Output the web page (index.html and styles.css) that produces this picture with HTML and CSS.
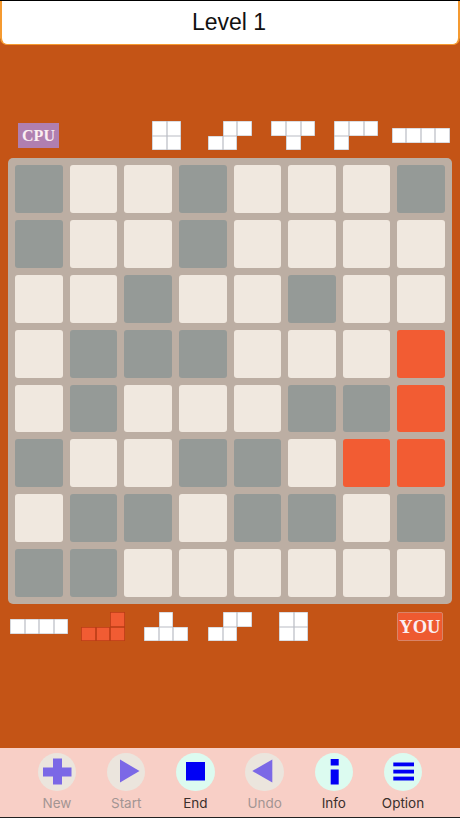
FILE: index.html
```html
<!DOCTYPE html>
<html lang="en">
<head>
<meta charset="utf-8">
<title>Level 1</title>
<link rel="stylesheet" href="styles.css">
</head>
<body>
<div class="screen">
  <header class="title-bar">Level 1</header>
  <main class="game">
    <div class="tray tray-cpu">
      <div class="badge badge-cpu">CPU</div>
      <div class="piece p-square c-square"><i></i><i></i><i></i><i></i></div>
      <div class="piece p-three c-s"><b></b><i></i><i></i><i></i><i></i><b></b></div>
      <div class="piece p-three c-t"><i></i><i></i><i></i><b></b><i></i><b></b></div>
      <div class="piece p-three c-l"><i></i><i></i><i></i><i></i><b></b><b></b></div>
      <div class="piece p-line c-line"><i></i><i></i><i></i><i></i></div>
    </div>
    <div class="board">
      <div class="cell g"></div><div class="cell"></div><div class="cell"></div><div class="cell g"></div><div class="cell"></div><div class="cell"></div><div class="cell"></div><div class="cell g"></div>
      <div class="cell g"></div><div class="cell"></div><div class="cell"></div><div class="cell g"></div><div class="cell"></div><div class="cell"></div><div class="cell"></div><div class="cell"></div>
      <div class="cell"></div><div class="cell"></div><div class="cell g"></div><div class="cell"></div><div class="cell"></div><div class="cell g"></div><div class="cell"></div><div class="cell"></div>
      <div class="cell"></div><div class="cell g"></div><div class="cell g"></div><div class="cell g"></div><div class="cell"></div><div class="cell"></div><div class="cell"></div><div class="cell r"></div>
      <div class="cell"></div><div class="cell g"></div><div class="cell"></div><div class="cell"></div><div class="cell"></div><div class="cell g"></div><div class="cell g"></div><div class="cell r"></div>
      <div class="cell g"></div><div class="cell"></div><div class="cell"></div><div class="cell g"></div><div class="cell g"></div><div class="cell"></div><div class="cell r"></div><div class="cell r"></div>
      <div class="cell"></div><div class="cell g"></div><div class="cell g"></div><div class="cell"></div><div class="cell g"></div><div class="cell g"></div><div class="cell"></div><div class="cell g"></div>
      <div class="cell g"></div><div class="cell g"></div><div class="cell"></div><div class="cell"></div><div class="cell"></div><div class="cell"></div><div class="cell"></div><div class="cell"></div>
    </div>
    <div class="tray tray-you">
      <div class="piece p-line"><i></i><i></i><i></i><i></i></div>
      <div class="piece p-three used y-l"><b></b><b></b><i></i><i></i><i></i><i></i></div>
      <div class="piece p-three y-t"><b></b><i></i><b></b><i></i><i></i><i></i></div>
      <div class="piece p-three y-s"><b></b><i></i><i></i><i></i><i></i><b></b></div>
      <div class="piece p-square y-square"><i></i><i></i><i></i><i></i></div>
      <div class="badge badge-you">YOU</div>
    </div>
  </main>
  <nav class="toolbar">
    <div class="tool off">
      <span class="disc"><svg viewBox="0 0 38 38"><path d="M15 5.500h9v9h9.500v9H24v8h-9v-8H5v-9h10z"/></svg></span>
      <span class="label">New</span>
    </div>
    <div class="tool off">
      <span class="disc"><svg viewBox="0 0 38 38"><path d="M13 6.500L32.500 18 13 29.500z"/></svg></span>
      <span class="label">Start</span>
    </div>
    <div class="tool">
      <span class="disc"><svg viewBox="0 0 38 38"><rect x="10" y="9" width="19" height="18.500"/></svg></span>
      <span class="label">End</span>
    </div>
    <div class="tool off">
      <span class="disc"><svg viewBox="0 0 38 38"><path d="M27.300 6.500v23L7.300 18z"/></svg></span>
      <span class="label">Undo</span>
    </div>
    <div class="tool">
      <span class="disc"><svg viewBox="0 0 38 38"><rect x="15.700" y="6" width="8" height="6.500"/><rect x="15.700" y="16.500" width="8" height="15"/></svg></span>
      <span class="label">Info</span>
    </div>
    <div class="tool">
      <span class="disc"><svg viewBox="0 0 38 38"><rect x="9.300" y="9.500" width="20.700" height="3.800"/><rect x="9.300" y="16.700" width="20.700" height="3.800"/><rect x="9.300" y="23.600" width="20.700" height="3.900"/></svg></span>
      <span class="label">Option</span>
    </div>
  </nav>
</div>
</body>
</html>
```
FILE: styles.css
```css
* { box-sizing: border-box; }
html, body { margin: 0; padding: 0; }
.screen {
  width: 460px;
  height: 818px;
  display: flex;
  flex-direction: column;
  background: #c45416;
  overflow: hidden;
}
.title-bar {
  height: 44px;
  margin: 1px 0 0;
  padding-right: 2px;
  background: #fff;
  border-bottom: 1.500px solid #f59a30;
  border-left: 2px solid #f59a30;
  border-right: 2px solid #f59a30;
  border-radius: 0 0 7px 7px;
  font: 23px/42px "Liberation Sans", Arial, sans-serif;
  text-align: center;
  color: #111;
  box-shadow: 0 -1px 0 #000;
}
.game {
  flex: 1;
  display: flex;
  flex-direction: column;
  padding: 76px 8px 0;
}
.tray {
  display: flex;
  align-items: center;
  height: 29px;
}
.tray-cpu { padding-left: 10px; margin-bottom: 8px; }
.tray-you { margin-top: 8px; padding-left: 2px; }
.badge {
  font: bold 16px "Liberation Serif", "Times New Roman", serif;
  display: flex;
  align-items: center;
  justify-content: center;
  color: #fbeef2;
}
.badge-cpu { width: 41px; height: 25px; background: #b07fb0; }
.badge-you {
  width: 46px;
  height: 29px;
  margin-left: 88.700px;
  padding-top: 1px;
  background: #ee5a30;
  border: 1px solid #d98468;
  border-radius: 2px;
  font-size: 18.500px;
}
.piece {
  display: grid;
  grid-auto-rows: 14.670px;
}
.piece i {
  background: #fff;
  box-shadow: inset 0 0 0 0.600px #b9bcc4;
}
.p-square { grid-template-columns: repeat(2, 14.670px); }
.p-three { grid-template-columns: repeat(3, 14.670px); }
.p-line { grid-template-columns: repeat(4, 14.580px); }
.used i { background: #f15c33; box-shadow: inset 0 0 0 0.800px #b83c16; }
.c-square { margin-left: 93px; }
.c-s { margin-left: 26.660px; }
.c-t { margin-left: 19.300px; }
.c-l { margin-left: 19.200px; }
.c-line { margin-left: 13.200px; }
.y-l { margin-left: 12.700px; }
.y-t { margin-left: 19px; }
.y-s { margin-left: 20px; }
.y-square { margin-left: 27px; }
.board {
  display: grid;
  grid-template-columns: repeat(8, 1fr);
  grid-template-rows: repeat(8, 1fr);
  gap: 7px;
  width: 444px;
  height: 446px;
  padding: 7px;
  background: #bcaea3;
  border-radius: 5px;
}
.cell { background: #f0e8df; border-radius: 3px; }
.cell.g { background: #959a97; }
.cell.r { background: #f25c33; }
.toolbar {
  height: 70px;
  display: flex;
  padding: 4.500px 22.400px 0;
  background: #f8cfc6;
  box-shadow: inset 0 -1px 0 #222;
}
.tool {
  width: 69.300px;
  display: flex;
  flex-direction: column;
  align-items: center;
  gap: 1.500px;
  font: 13.500px/20px Inter, "Liberation Sans", sans-serif;
  color: #3a2f2c;
}
.disc {
  width: 38.500px;
  height: 38.500px;
  border-radius: 50%;
  background: #dcfbf0;
  display: block;
}
.disc svg { display: block; width: 38px; height: 38px; fill: #0000f5; }
.off { color: #a39593; }
.off .disc { background: #ebe5dd; }
.off .disc svg { fill: #7b68e6; }
```
